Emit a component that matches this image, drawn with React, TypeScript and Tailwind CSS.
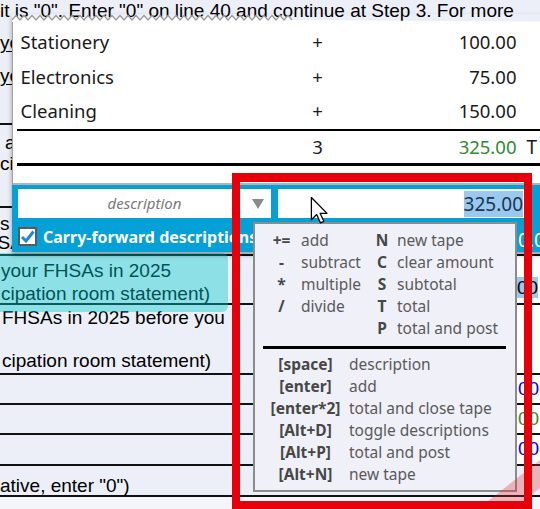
import React from "react";

const tape = [
  { desc: "Stationery", op: "+", amt: "100.00" },
  { desc: "Electronics", op: "+", amt: "75.00" },
  { desc: "Cleaning", op: "+", amt: "150.00" },
];

const opKeys = [
  ["+=", "add", "N", "new tape"],
  ["-", "subtract", "C", "clear amount"],
  ["*", "multiple", "S", "subtotal"],
  ["/", "divide", "T", "total"],
  ["", "", "P", "total and post"],
];

const shortcuts = [
  ["[space]", "description"],
  ["[enter]", "add"],
  ["[enter*2]", "total and close tape"],
  ["[Alt+D]", "toggle descriptions"],
  ["[Alt+P]", "total and post"],
  ["[Alt+N]", "new tape"],
];

const zig = Array.from({ length: 71 }, (_, i) => `${i * 4},${i % 2 ? 1.5 : 6}`).join(" ");

function FormPage() {
  return (
    <div className="flex flex-col w-[540px] h-[509px] bg-[#eceff8] text-[19px] text-black font-['Liberation_Sans',Arial,sans-serif] whitespace-nowrap">
      {/* A */}
      <div className="h-[22px] leading-[22px] shrink-0">
        it is "0". Enter "0" on line 40 and continue at Step 3. For more
      </div>
      {/* B */}
      <div className="h-[34px] pt-[10px] leading-[22px] shrink-0">
        <span className="underline underline-offset-2">your</span>
      </div>
      {/* C */}
      <div className="h-[32px] pt-[9px] leading-[22px] shrink-0">
        <span className="underline underline-offset-2">your</span>
      </div>
      {/* D */}
      <div className="h-[37px] border-b-2 border-[#111] shrink-0" />
      {/* E */}
      <div className="h-[45px] pt-[6.5px] leading-[21px] shrink-0">
        <div className="pl-[5px]">a</div>
        <div>ci</div>
      </div>
      {/* F */}
      <div className="h-[38px] border-b-2 border-[#111] shrink-0" />
      {/* G */}
      <div className="h-[48px] pt-[5.5px] leading-[19px] border-b-2 border-[#111] shrink-0">
        <div>s</div>
        <div className="-ml-[14px]">FSA</div>
      </div>
      {/* H */}
      <div className="h-[49px] flex border-b-2 border-[#111] shrink-0">
        <div className="flex-1 pt-[2.5px] leading-[23px] pl-[1px]">
          <div>your FHSAs in 2025</div>
          <div>cipation room statement)</div>
        </div>
        <div className="w-[40px] bg-white pt-[21px] leading-[22px]">
          <span className="bg-[#99c9ef] pl-[17px]">00</span>
        </div>
      </div>
      {/* I */}
      <div className="h-[70px] flex border-b-2 border-[#111] shrink-0">
        <div className="flex-1 pt-[0.5px] leading-[23px] pl-[2px]">
          <div>FHSAs in 2025 before you</div>
          <div className="mt-[20px]">cipation room statement)</div>
        </div>
        <div className="w-[40px] bg-white" />
      </div>
      {[
        ["#0000ee", "h-[30px]"],
        ["#3a8a2a", "h-[30px]"],
        ["#0000ee", "h-[31px]"],
      ].map(([c, h], i) => (
        <div key={i} className={`${h} flex border-b-2 border-[#111] shrink-0`}>
          <div className="flex-1" />
          <div className="w-[40px] bg-white leading-[28px] pl-[18px]" style={{ color: c }}>
            00
          </div>
        </div>
      ))}
      {/* M */}
      <div className="h-[31px] pt-[9px] leading-[22px] border-b-2 border-[#111] shrink-0">
        ative, enter "0")
      </div>
      <div className="flex-1 bg-[#f3f5fb]" />
    </div>
  );
}

function TapePanel() {
  return (
    <div className="absolute left-[12px] top-[14px] w-[560px] font-['Noto_Sans',sans-serif] shadow-[0_3px_5px_rgba(0,0,0,0.35)]">
      <svg width="560" height="8" className="block">
        <polygon points={`0,8 ${zig} 560,8`} fill="#ffffff" />
        <polyline points={zig} fill="none" stroke="#9b9b9b" strokeWidth="1.2" />
      </svg>
      <div className="bg-white border-l-[1.5px] border-[#a3a3a3] pt-[3px] text-[18.5px] text-[#1a1a1a]">
        {tape.map((r) => (
          <div key={r.desc} className="grid grid-cols-[282px_30px_184px_40px] h-[34.5px] items-center pl-[7.5px]">
            <span>{r.desc}</span>
            <span className="text-center">{r.op}</span>
            <span className="text-right">{r.amt}</span>
            <span />
          </div>
        ))}
        <div className="ml-[4px] h-[2.5px] bg-black" />
        <div className="grid grid-cols-[282px_30px_184px_40px] h-[32px] items-center pl-[7.5px]">
          <span />
          <span className="text-center">3</span>
          <span className="text-right text-[#2f8a2f]">325.00</span>
          <span className="pl-[10px] text-[19px]">T</span>
        </div>
        <div className="ml-[4px] h-[2.5px] bg-black" />
        <div className="h-[19.5px] border-b-2 border-[#b4b4b4]" />
      </div>

      {/* entry bar */}
      <div className="bg-[#04a0d6] pt-[4px] pb-[6px] pl-[6px]">
        <div className="flex gap-[7px]">
          <div className="w-[253px] h-[29px] bg-white flex items-center">
            <span className="w-[19px]" />
            <span className="flex-1 text-center italic text-[15px] text-[#7a7a7a]">description</span>
            <svg width="12" height="10" viewBox="0 0 12 10" className="mr-[7px]">
              <polygon points="0,0 12,0 6,10" fill="#8a8a8a" />
            </svg>
          </div>
          <div className="w-[248px] h-[29px] bg-white flex items-center justify-end pr-[3px]">
            <span className="bg-[#99c9ef] text-[#1b3550] text-[19px] leading-[26px]">325.00</span>
          </div>
        </div>
        <div className="flex items-center mt-[9px] h-[19px]">
          <div className="w-[19px] h-[19px] border-2 border-[#5a5a5a] bg-white flex items-center justify-center">
            <svg width="15" height="15" viewBox="0 0 15 15">
              <path d="M2 8 L6 12 L13.5 2.5" fill="none" stroke="#1e88d6" strokeWidth="3" />
            </svg>
          </div>
          <span className="ml-[6px] w-[475px] text-white font-bold text-[16px] whitespace-nowrap">
            Carry-forward descriptions
          </span>
          <span className="text-white text-[19px] leading-[19px] mt-[8px]">0.0</span>
        </div>
      </div>
    </div>
  );
}

function HelpPopup() {
  return (
    <div className="absolute left-[253px] top-[222px] w-[264px] h-[270px] border-2 border-[#8c8c8c] bg-[#eff0f8] font-['Noto_Sans',sans-serif] text-[15.5px] text-[#5a5a5a] whitespace-nowrap">
      <div className="pt-[6px] pl-[7px]">
        {opKeys.map(([s, a, k, b], i) => (
          <div key={i} className="flex items-center h-[22px]">
            <span className="w-[39px] text-center font-bold text-[#474747]">{s}</span>
            <span className="w-[71px]">{a}</span>
            <span className="w-[20px] text-center font-bold text-[#474747]">{k}</span>
            <span className="ml-[5px]">{b}</span>
          </div>
        ))}
      </div>
      <div className="mt-[6px] ml-[8px] mr-[9px] h-[3px] bg-black" />
      <div className="pt-[5px] pl-[11px]">
        {shortcuts.map(([k, d]) => (
          <div key={k} className="flex items-center h-[22px]">
            <span className="w-[79px] text-center font-bold text-[#474747]">{k}</span>
            <span className="ml-[4px]">{d}</span>
          </div>
        ))}
      </div>
    </div>
  );
}

export default function App() {
  return (
    <div className="relative w-[540px] h-[509px] overflow-hidden">
      <FormPage />
      {/* highlighted field */}
      <div className="absolute left-0 top-[253px] w-[228px] h-[59px] rounded-r-[6px] bg-[#00cacb]/40" />
      <TapePanel />
      <HelpPopup />
      {/* cursor */}
      <svg width="18" height="28" viewBox="0 0 13 20" className="absolute left-[310px] top-[196px]">
        <path d="M1 1 L1 17 L4.8 13.3 L7.6 19.3 L10 18.2 L7.3 12.4 L12.3 12.4 Z" fill="#ffffff" stroke="#000" strokeWidth="0.9" strokeLinejoin="round" />
      </svg>
      {/* annotation */}
      <svg width="540" height="509" className="absolute left-0 top-0 pointer-events-none">
        <polygon points="478,509 512,509 540,488 540,460" fill="rgba(225,40,40,0.3)" />
      </svg>
      <div className="absolute left-[232px] top-[173px] w-[300px] h-[336px] border-[8px] border-t-[9px] border-[#e6000a]" />
    </div>
  );
}
